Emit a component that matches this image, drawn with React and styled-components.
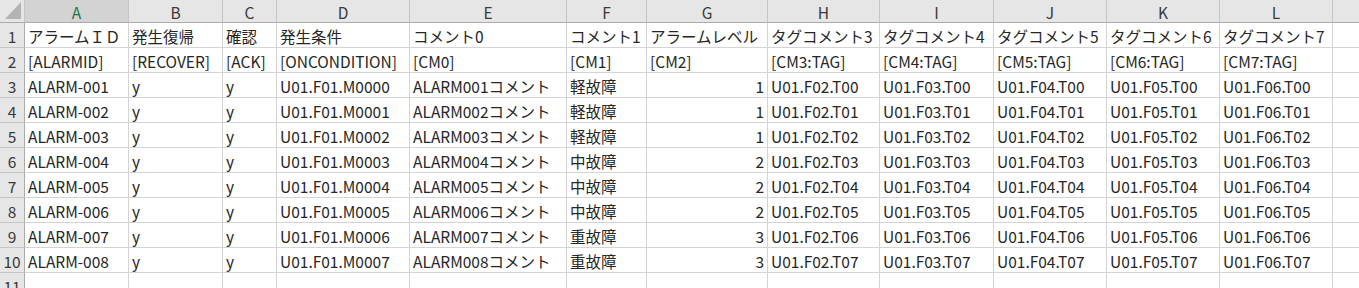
import React from "react"
import styled, { createGlobalStyle } from "styled-components"

const GlobalStyle = createGlobalStyle`
    html, body {
        margin: 0;
        padding: 0;
        background: #ffffff;
        overflow: hidden;
    }
`

const columns = [
    { key: "A", width: 104 },
    { key: "B", width: 94 },
    { key: "C", width: 54 },
    { key: "D", width: 133 },
    { key: "E", width: 157 },
    { key: "F", width: 80 },
    { key: "G", width: 121 },
    { key: "H", width: 112 },
    { key: "I", width: 114 },
    { key: "J", width: 113 },
    { key: "K", width: 113 },
    { key: "L", width: 113 },
    { key: "M", width: 120 },
]

const levels = ["軽故障", "軽故障", "軽故障", "中故障", "中故障", "中故障", "重故障", "重故障"]

const rows = [
    ["アラームＩＤ", "発生復帰", "確認", "発生条件", "コメント0", "コメント1", "アラームレベル", "タグコメント3", "タグコメント4", "タグコメント5", "タグコメント6", "タグコメント7", ""],
    ["[ALARMID]", "[RECOVER]", "[ACK]", "[ONCONDITION]", "[CM0]", "[CM1]", "[CM2]", "[CM3:TAG]", "[CM4:TAG]", "[CM5:TAG]", "[CM6:TAG]", "[CM7:TAG]", ""],
    ...levels.map((lv, i) => {
        const n = String(i + 1).padStart(3, "0")
        const t = `T0${i}`
        return [
            `ALARM-${n}`,
            "y",
            "y",
            `U01.F01.M000${i}`,
            `ALARM${n}コメント`,
            lv,
            { value: lv === "軽故障" ? 1 : lv === "中故障" ? 2 : 3, right: true },
            `U01.F02.${t}`,
            `U01.F03.${t}`,
            `U01.F04.${t}`,
            `U01.F05.${t}`,
            `U01.F06.${t}`,
            "",
        ]
    }),
    Array(13).fill(""),
]

const rowLabels = ["1", "2", "3", "4", "5", "6", "7", "8", "9", "10", "11"]

export default function App() {
    return (
        <>
            <GlobalStyle />
            <Sheet
                $template={`25px ${columns.map(c => c.width + "px").join(" ")}`}
            >
                <Corner>
                    <svg width="16" height="17" viewBox="0 0 16 17">
                        <polygon points="16,0 16,17 0,17" fill="#b3b3b3" />
                    </svg>
                </Corner>
                {columns.map(c => (
                    <ColHeader key={c.key} $active={c.key === "A"}>
                        {c.key === "M" ? "" : c.key}
                    </ColHeader>
                ))}
                {rows.map((row, r) => (
                    <React.Fragment key={r}>
                        <RowHeader>{rowLabels[r]}</RowHeader>
                        {row.map((cell, c) => {
                            const isObj = typeof cell === "object"
                            return (
                                <Cell key={c} $right={isObj && cell.right}>
                                    {isObj ? cell.value : cell}
                                </Cell>
                            )
                        })}
                    </React.Fragment>
                ))}
            </Sheet>
        </>
    )
}

const Sheet = styled.div`
    display: grid;
    grid-template-columns: ${p => p.$template};
    grid-template-rows: 23px repeat(11, 25px);
    width: 1359px;
    height: 288px;
    overflow: hidden;
    font-family: "Noto Sans CJK JP", "Noto Sans", sans-serif;
    font-size: 15.5px;
    color: #262626;
`

const Corner = styled.div`
    box-sizing: border-box;
    background: #e6e6e6;
    border-right: 1px solid #c6c6c6;
    border-bottom: 1px solid #ababab;
    display: flex;
    align-items: flex-end;
    justify-content: flex-end;
    padding: 0 3px 3px 0;
`

const ColHeader = styled.div`
    box-sizing: border-box;
    background: ${p => (p.$active ? "#d3d3d3" : "#e6e6e6")};
    color: ${p => (p.$active ? "#217346" : "#3a3a3a")};
    border-right: 1px solid #c6c6c6;
    border-bottom: 1px solid #ababab;
    display: flex;
    align-items: center;
    justify-content: center;
    line-height: 22px;
    padding-top: 1px;
`

const RowHeader = styled.div`
    box-sizing: border-box;
    background: #e6e6e6;
    color: #3a3a3a;
    border-right: 1px solid #ababab;
    border-bottom: 1px solid #c6c6c6;
    display: flex;
    align-items: center;
    justify-content: center;
    line-height: 24px;
    padding-top: 1px;
`

const Cell = styled.div`
    box-sizing: border-box;
    border-right: 1px solid #d4d4d4;
    border-bottom: 1px solid #d4d4d4;
    padding: 1px 3px 0 3px;
    line-height: 24px;
    white-space: nowrap;
    overflow: visible;
    text-align: ${p => (p.$right ? "right" : "left")};
`
